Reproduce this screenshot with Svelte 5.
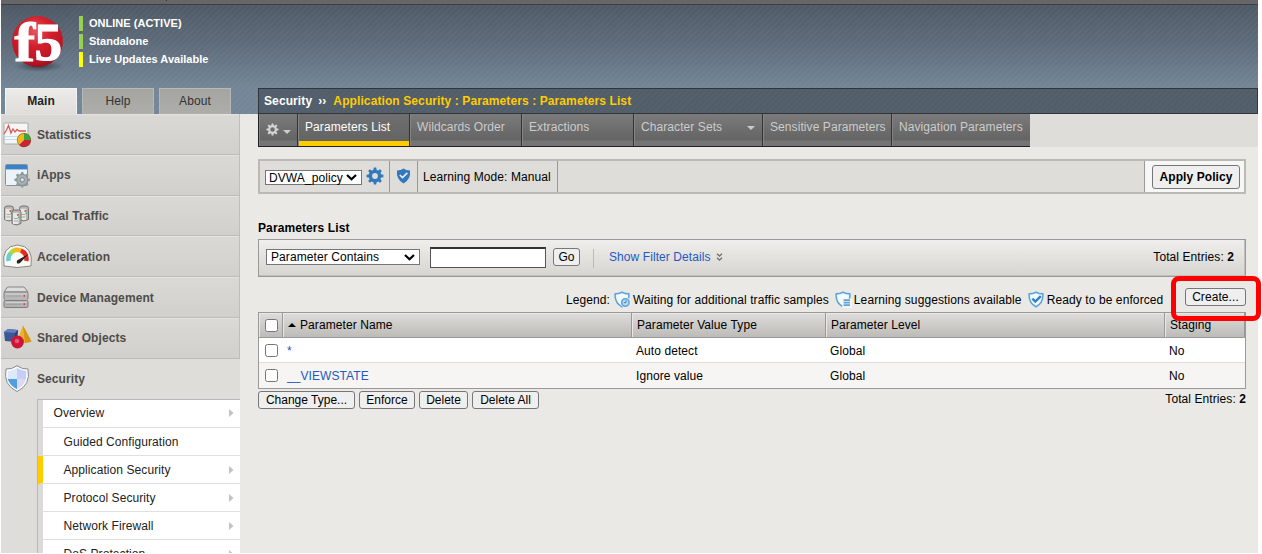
<script>
  const modules = [
    { name: 'Statistics', icon: 'stats' },
    { name: 'iApps', icon: 'iapps' },
    { name: 'Local Traffic', icon: 'traffic' },
    { name: 'Acceleration', icon: 'gauge' },
    { name: 'Device Management', icon: 'device' },
    { name: 'Shared Objects', icon: 'shapes' },
    { name: 'Security', icon: 'shield' }
  ];
  const submenu = [
    { name: 'Overview', top: true, arrow: true },
    { name: 'Guided Configuration' },
    { name: 'Application Security', arrow: true, active: true },
    { name: 'Protocol Security', arrow: true },
    { name: 'Network Firewall', arrow: true },
    { name: 'DoS Protection', arrow: true }
  ];
  const tabs = [
    { name: 'Parameters List', width: 112, active: true },
    { name: 'Wildcards Order', width: 112 },
    { name: 'Extractions', width: 112 },
    { name: 'Character Sets', width: 129, menu: true },
    { name: 'Sensitive Parameters', width: 129 },
    { name: 'Navigation Parameters', width: 138 }
  ];
  const rows = [
    { name: '*', type: 'Auto detect', level: 'Global', staging: 'No' },
    { name: '__VIEWSTATE', type: 'Ignore value', level: 'Global', staging: 'No' }
  ];
  const teeth = [0, 45, 90, 135, 180, 225, 270, 315];
</script>

{#snippet gear(size, color, hole)}
  <svg width={size} height={size} viewBox="0 0 18 18">
    {#each teeth as a}
      <path d="M7.2 4 L7.8 .6 H10.2 L10.8 4Z" fill={color} transform="rotate({a} 9 9)" />
    {/each}
    <circle cx="9" cy="9" r="4.6" fill="none" stroke={color} stroke-width={hole} />
  </svg>
{/snippet}

{#snippet chevron()}
  <svg width="11" height="7" viewBox="0 0 11 7"><path d="M1 1 L5.5 5.2 L10 1" fill="none" stroke="#000" stroke-width="2.2" /></svg>
{/snippet}

{#snippet legendShield(kind)}
  <svg class="lshield" width="17" height="17" viewBox="0 0 17 17">
    <path d="M1.2 2.9 Q5 2.8 8 1.2 Q11 2.8 14.8 2.9 Q15.6 11.8 8 15.8 Q.4 11.8 1.2 2.9Z" fill="#f4faff" stroke="#5da5da" stroke-width="1.6" />
    {#if kind === 'wait'}
      <circle cx="11.4" cy="11.3" r="5.2" fill="#f3f5f5" />
      <circle cx="11.4" cy="11.5" r="3.7" fill="#b9dbf3" stroke="#5da5da" stroke-width="1.6" />
      <path d="M12 9.2V11.7H9.8" fill="none" stroke="#3d86c0" />
    {:else if kind === 'learn'}
      <rect x="7.2" y="7.6" width="9.8" height="9.4" fill="#f3f5f5" />
      <path d="M8.6 9.2H15 M8.6 11.7H15 M8.6 14.2H15" stroke="#5da5da" stroke-width="1.8" />
    {:else}
      <path d="M4.4 7.6L7.3 10.6L12.8 5.1" fill="none" stroke="#2d82c8" stroke-width="2.4" />
    {/if}
  </svg>
{/snippet}

{#snippet moduleIcon(kind)}
  <svg width="30" height="30" viewBox="0 0 30 30">
    {#if kind === 'stats'}
      <rect x="2" y="3" width="24" height="21" rx="1" fill="#f5f6f6" stroke="#aaa" />
      <path d="M3 16.5H25M3 19.5H25" stroke="#c3dff1" />
      <path d="M2 14L4.5 10L6.5 5.5L9 13L11 9L13 12L15 9.5L17 11H24" fill="none" stroke="#d75a5b" stroke-width="1.3" />
      <path d="M22 20V13A7 7 0 0 0 17 25Z" fill="#f2b91c" />
      <path d="M22 20V13A7 7 0 0 1 29 20Z" fill="#3da638" />
      <path d="M22 20H29A7 7 0 0 1 17 25Z" fill="#ce2036" />
      <circle cx="22" cy="20" r="6.7" fill="none" stroke="#6e5c20" stroke-opacity=".5" />
    {:else if kind === 'iapps'}
      <rect x="3.5" y="4.5" width="22" height="21" rx="1" fill="#edf4f8" stroke="#8293a2" />
      <rect x="4" y="5" width="21" height="4" fill="#3c82c7" />
      <path d="M4 9.5H25" stroke="#9fc4e4" />
      {#each teeth as a}
        <path d="M18.4 15L19.1 12H21.3L22 15Z" fill="#929da0" transform="rotate({a} 20.2 19.8)" />
      {/each}
      <circle cx="20.2" cy="19.8" r="5.6" fill="#a6b0b1" stroke="#849094" />
      <circle cx="20.2" cy="19.8" r="2.2" fill="#d9dddd" stroke="#788588" />
    {:else if kind === 'traffic'}
      {#each [[2.5, 5], [17.5, 5], [10, 9]] as [x, y]}
        <path d="M{x} {y + 2.5}Q{x} {y} {x + 2.5} {y}H{x + 6.5}Q{x + 9} {y} {x + 9} {y + 2.5}V{y + 13.5}Q{x + 4} {y + 16.5} {x} {y + 13.5}Z" fill="#b5b5b3" stroke="#777" />
        <path d="M{x + 1} {y + 2.8}H{x + 6.5}V{y + 14}H{x + 1}Z" fill="#e6e6e4" />
        <path d="M{x + 2} {y + 8.5}H{x + 6}M{x + 2} {y + 11}H{x + 6}" stroke="#aaa" />
        <rect x={x + 5} y={y + 4} width="1.8" height="1.8" fill="#dd5050" /><rect x={x + 6} y={y + 6.5} width="1.5" height="1.5" fill="#47bd43" />
      {/each}
    {:else if kind === 'gauge'}
      <path d="M2 24Q-1 4 15.5 3Q32 4 29 24Q15 27 2 24Z" fill="#faf9f6" stroke="#858582" />
      <path d="M6.7 19A8.7 8.7 0 0 1 8.8 11" fill="none" stroke="#65cfd1" stroke-width="4.5" />
      <path d="M8.4 11.6A8.7 8.7 0 0 1 13.2 8" fill="none" stroke="#b4d63b" stroke-width="4.5" />
      <path d="M12.8 8A8.7 8.7 0 0 1 19.5 9" fill="none" stroke="#ffb41e" stroke-width="4.5" />
      <path d="M19 8.6A8.7 8.7 0 0 1 24.2 19" fill="none" stroke="#e62822" stroke-width="4.5" />
      <path d="M15 18.5L26.5 12L18 21Q14 23 15 18.5Z" fill="#222" />
    {:else if kind === 'device'}
      <path d="M5.5 4H22L26 9H2Z" fill="#ddd" stroke="#858585" />
      <rect x="2" y="9" width="24" height="7.5" rx="1.2" fill="#b7b7b7" stroke="#818181" />
      <path d="M3 16.5H25V18H3Z" fill="#ececec" />
      <rect x="2" y="17.5" width="24" height="7" rx="1.2" fill="#b2b2b2" stroke="#7d7d7d" />
      <path d="M3.5 11H25M3.5 19.3H25" stroke="#d8d8d8" />
      <path d="M4 13H19M4 21.4H19" stroke="#a0a0a0" /><path d="M21.5 12.8H23M21.5 21.2H23" stroke="#e43b42" stroke-width="1.7" />
    {:else if kind === 'shapes'}
      <path d="M2 9L6 6L16 7L14 19L3 18Z" fill="#3b5795" /><path d="M2 9L6 6L16 7L13 10Z" fill="#637fbd" /><path d="M13 10L16 7L15 20L12 20Z" fill="#294078" />
      <path d="M21 2.5L29.5 18.5Q23 21.5 15 18Z" fill="#edb22d" /><path d="M21 2.5L29.5 18.5L23 20Z" fill="#d69418" />
      <circle cx="15.5" cy="19" r="6.4" fill="#ce1539" /><circle cx="15" cy="18" r="2.3" fill="#ee7990" opacity=".7" />
    {:else}
      <path d="M4 5Q10 5.5 15 1.7Q20 5.5 26 5Q29 21 15 27.5Q1 21 4 5Z" fill="#fafbfc" stroke="#858b92" />
      <path d="M6 7Q11 7 15 4V15H5.7Z" fill="#dce9f9" /><path d="M15 4Q20 7 24.2 7L24 15H15Z" fill="#c8cdf7" />
      <path d="M5.7 15H15V25.2Q8 22 5.7 15Z" fill="#529dde" /><path d="M15 15H24Q22 22 15 25.2Z" fill="#dcd9f8" />
    {/if}
  </svg>
{/snippet}

<div class="page">
  <div class="topline"><i></i></div>
  <header>
    <div class="brand">
      <svg class="logo" width="56" height="58" viewBox="0 0 56 58">
        <defs>
          <radialGradient id="ball" cx=".45" cy=".3" r=".75"><stop offset="0" stop-color="#e8555e" /><stop offset=".4" stop-color="#d2202d" /><stop offset=".8" stop-color="#bd1424" /><stop offset="1" stop-color="#8c0e1a" /></radialGradient>
          <radialGradient id="shade"><stop offset="0" stop-color="#202832" stop-opacity=".75" /><stop offset="1" stop-color="#303a45" stop-opacity="0" /></radialGradient>
        </defs>
        <ellipse cx="28" cy="51" rx="25" ry="6" fill="url(#shade)" />
        <circle cx="26.5" cy="26.5" r="25.4" fill="url(#ball)" />
        <g stroke="#fff" stroke-width="1.2">
          <text transform="translate(3.5 45.5) scale(1.12 1)" class="f">f</text>
          <text transform="translate(23.5 45) scale(1.04 1)" class="five">5</text>
        </g>
      </svg>
      <div class="status">
        <span>ONLINE (ACTIVE)</span><span>Standalone</span><span class="warn">Live Updates Available</span>
      </div>
    </div>
    <nav class="maintabs"><b>Main</b><span>Help</span><span>About</span></nav>
    <div class="crumbs"><b>Security</b><b class="sep">››</b><b class="path">Application Security : Parameters : Parameters List</b></div>
  </header>

  <div class="body">
    <aside>
      {#each modules as m}
        <div class="module" class:open={m.icon === 'shield'}>{@render moduleIcon(m.icon)}<b>{m.name}</b></div>
      {/each}
      <div class="submenu">
        {#each submenu as s}
          <div class="sub" class:active={s.active} class:top={s.top}>
            <span>{s.name}</span>
            {#if s.arrow}<svg width="5" height="8" viewBox="0 0 5 8"><path d="M0 0L4.5 4L0 8Z" fill="#c2c2c2" /></svg>{/if}
          </div>
        {/each}
      </div>
    </aside>

    <main>
      <div class="tabbar">
        <div class="tabs">
          <div class="tab cog">{@render gear(13, '#d5d5d5', 2.8)}<i class="tri"></i></div>
          {#each tabs as t}
            <div class="tab" class:active={t.active} style="width:{t.width}px"><span>{t.name}</span>{#if t.menu}<i class="tri"></i>{/if}</div>
          {/each}
        </div>
      </div>

      <div class="toolbar">
        <div class="cell policy"><div class="select"><span>DVWA_policy</span>{@render chevron()}</div>{@render gear(18, '#3178bc', 3.4)}</div>
        <div class="cell badge">
          <svg width="15" height="16" viewBox="0 0 15 16"><path d="M1 2.5Q5 2.5 7.5 .6Q10 2.5 14 2.5Q15 11.5 7.5 15.5Q0 11.5 1 2.5Z" fill="#3178bc" /><path d="M3.8 7L6.5 9.6L11.3 4.9" fill="none" stroke="#e9edf1" stroke-width="1.6" /></svg>
        </div>
        <div class="cell mode">Learning Mode: Manual</div>
        <div class="apply"><button>Apply Policy</button></div>
      </div>

      <h1>Parameters List</h1>
      <div class="filter">
        <div class="select wide"><span>Parameter Contains</span>{@render chevron()}</div>
        <input type="text" aria-label="Filter value" />
        <button class="go">Go</button>
        <i class="divider"></i>
        <a href="#filter">Show Filter Details</a>
        <svg class="more" width="7" height="9" viewBox="0 0 7 9"><path d="M1 .8L3.5 3L6 .8M1 4.8L3.5 7L6 4.8" fill="none" stroke="#77746c" stroke-width="1.4" /></svg>
        <span class="total">Total Entries: <b>2</b></span>
      </div>

      <div class="legend">
        <span>Legend:</span>{@render legendShield('wait')}<span class="l1">Waiting for additional traffic samples</span>
        {@render legendShield('learn')}<span class="l2">Learning suggestions available</span>
        {@render legendShield('ready')}<span class="l3">Ready to be enforced</span>
        <div class="create"><button>Create...</button><i class="mark"></i></div>
      </div>

      <div class="table">
        <div class="tr th">
          <div class="ck"><input type="checkbox" aria-label="Select all" /></div>
          <div class="name"><i class="up"></i>Parameter Name</div><div>Parameter Value Type</div><div>Parameter Level</div><div>Staging</div>
        </div>
        {#each rows as r}
          <div class="tr">
            <div class="ck"><input type="checkbox" aria-label="Select row" /></div>
            <div><a href="#param">{r.name}</a></div><div>{r.type}</div><div>{r.level}</div><div>{r.staging}</div>
          </div>
        {/each}
      </div>

      <div class="actions">
        <button style="width:97px">Change Type...</button><button style="width:56px">Enforce</button><button style="width:49px">Delete</button><button style="width:67px">Delete All</button>
        <span class="total">Total Entries: <b>2</b></span>
      </div>
    </main>
  </div>
</div>

<style>
  :global(body) { background: #fff; overflow: hidden; }
  * { box-sizing: border-box; }
  .page { position: relative; margin-left: 1px; width: 1257px; height: 553px; background: #eae9e5; color: #000; font: 12px/16px "Liberation Sans", Arial, sans-serif; letter-spacing: .08px; white-space: nowrap; }
  i { display: block; }
  svg { display: block; flex: none; }
  a { color: #2359c4; text-decoration: none; }
  .topline { height: 5px; background: #666; border-bottom: 1px solid #3d3f42; }
  .topline i { width: 1px; height: 1px; margin-left: 165px; background: #333; }
  header { height: 109px; display: grid; grid-template-columns: 257px 1fr; grid-template-rows: 83px 26px; background: repeating-linear-gradient(135deg, rgba(255,255,255,.03) 0 1.41px, transparent 1.41px 4.243px), linear-gradient(#4f5a66, #5f6d7c 38%, #738596 75%, #748799); }
  .brand { grid-column: 1 / 3; display: flex; padding: 10px 0 0 10px; }
  .logo text { fill: #fff; font-family: "Liberation Serif", serif; font-weight: 700; letter-spacing: 0; }
  .logo { overflow: visible; }
  .f { font-size: 55px; }
  .five { font-size: 53px; }
  .status { margin: 1px 0 0 12px; color: #fff; font-weight: 700; font-size: 11px; line-height: 15px; letter-spacing: .02px; }
  .status span { display: block; height: 15px; margin-bottom: 3px; border-left: 4px solid #97d151; padding-left: 6px; }
  .status .warn { border-color: #ff0; }
  .maintabs { display: flex; gap: 5px; padding-left: 4px; }
  .maintabs > * { width: 72px; height: 26px; border: 1px solid #b7b7b3; border-bottom: 0; background: linear-gradient(#a4a5a1, #adada9); color: #333; text-align: center; line-height: 25px; }
  .maintabs b { background: linear-gradient(#ecebe8, #deddd9); border-color: #f4f4f2; color: #222; }
  .crumbs { border: 1px solid #333538; background: repeating-linear-gradient(135deg, rgba(85,90,88,.6) 0 1.41px, transparent 1.41px 4.243px), #52606f; color: #fff; display: flex; padding-left: 5px; line-height: 24px; letter-spacing: .1px; }
  .sep { margin: 0 7px 0 6px; }
  .path { color: #fc0; }
  .body { display: flex; height: 439px; }
  aside { width: 239px; flex: none; background: #deddd9; overflow: hidden; }
  .module { height: 40.8px; display: flex; align-items: center; gap: 4px; padding: 1px 0 0 2px; border-right: 1px solid #bebebb; border-bottom: 1px solid #bcbcb9; box-shadow: inset 0 1px #e4e3e0; background: linear-gradient(#dad9d5, #d1d0cc); color: #4d4c4a; }
  .module b { letter-spacing: .09px; }
  .module svg { position: relative; left: -1px; }
  .module:first-child { padding-top: 2px; }
  .module.open { height: 40.2px; background: #deddd9; border: 0; box-shadow: none; }
  .submenu { margin-left: 36px; width: 203px; border-left: 1px solid #b7b7b7; border-top: 1px solid #b7b7b7; }
  .sub { height: 28.1px; display: flex; align-items: center; justify-content: space-between; padding: 0 6px 0 20.5px; border-left: 5px solid #dadada; border-bottom: 1px solid #e0e0e0; background: #fff; color: #222; }
  .sub.top { padding: 0 6px 1px 10.5px; }
  .sub.active { border-left-color: #fc0; }
  main { width: 1018px; padding-left: 18px; }
  .tabbar { height: 33px; background: linear-gradient(90deg, #eae9e5 500px, #deddd9 500px); }
  .tabs { display: flex; height: 33px; width: 772px; border: 1px solid #222; border-top: 0; color: #ccc; }
  .tab { flex: none; display: flex; justify-content: space-between; height: 32px; padding: 5px 7px 0 6px; border-right: 1px solid #333; border-left: 1px solid #858585; background: linear-gradient(#7b7b7b, #646464 26px, #757575 27px, #747474); }
  .tab:last-child { border-right: 0; }
  .tab.active { color: #fff; background: linear-gradient(#6f6f6f, #646464 27px, #fc0 27px); }
  .tab .tri { margin-top: 7px; }
  .tab.cog { width: 39px; padding: 9px 6px 0; }
  .tri { width: 0; height: 0; border: 4px solid transparent; border-top: 4.5px solid #ccc; border-bottom: 0; }
  .toolbar { margin-top: 12px; width: 988px; height: 35px; display: flex; border: 2px solid #b9b9b6; background: #deddd9; }
  .cell { border-right: 1px solid #999; display: flex; align-items: center; }
  .policy { width: 130px; padding-left: 5px; gap: 4px; }
  .policy > svg, .badge svg { margin-bottom: 1px; }
  .badge { width: 28px; padding-left: 6px; }
  .mode { width: 140px; padding-left: 5px; }
  .select { width: 97px; height: 15px; border: 1px solid #767676; background: #fff; display: flex; align-items: center; justify-content: space-between; padding: 0 4px 0 3px; margin-top: 2px; }
  .apply { margin-left: auto; width: 100px; background: #f7f7f5; border-left: 1px solid #999; display: flex; align-items: center; padding-left: 7px; }
  button { height: 18px; padding: 0; border: 1px solid #777; border-radius: 3px; background: #efefef; color: #000; font: 12px/14px "Liberation Sans", Arial, sans-serif; letter-spacing: .08px; }
  .apply button { width: 88px; height: 24px; font-weight: 700; }
  h1 { margin: 26px 0 3px; font-size: 12px; line-height: 16px; letter-spacing: .1px; }
  .filter { width: 988px; height: 38px; display: flex; align-items: center; border: 1px solid #999; box-shadow: inset -1px -1px #c0c0bd; background: linear-gradient(#efeeec, #d6d5d0); padding: 0 11px 2px 7px; }
  .filter .wide { width: 154px; height: 16px; margin: 0; padding: 0 4px; }
  .filter input { width: 116px; height: 21px; margin: 0 7px 0 10px; border: 1px solid #555; border-top: 2px solid #333; background: #fff; padding: 0; }
  .go { width: 27px; }
  .divider { width: 1px; height: 19px; margin: 2px 15px 0 13px; background: #bbb; }
  .more { margin-left: 5px; }
  .total { margin-left: auto; }
  .legend { height: 35px; width: 988px; display: flex; align-items: flex-end; padding: 0 0 4px 308px; }
  .lshield { margin: 0 2px 0 4px; }
  .l1, .l2 { margin-right: 2px; }
  .l1, .l2, .l3 { letter-spacing: .1px; }
  .create { position: relative; margin: 0 0 2px auto; width: 61px; height: 18px; }
  .create button { width: 61px; display: block; }
  .mark { position: absolute; left: -14px; top: -12px; width: 90px; height: 45px; border: 5px solid #f00; border-radius: 8px; }
  .table { width: 988px; border: 1px solid #999; box-shadow: inset -1px -1px #c5c5c2; }
  .tr { display: grid; grid-template-columns: 24px 349px 194px 339px 80px; height: 25px; background: #fff; border-bottom: 1px solid #ddd; line-height: 26px; }
  .tr > div { padding-left: 5px; }
  .tr > div:not(.ck) { padding-left: 4px; }
  .tr:last-child { background: #f6f5f3; border-bottom: 0; height: 25px; }
  .th { background: linear-gradient(#deddd9, #bcbbb7); border-bottom: 1px solid #999; line-height: 24px; }
  .th > div { border-right: 1px solid #999; box-shadow: inset 1px 1px #e9e8e5; }
  .tr.th > div:not(.ck) { padding-left: 5px; }
  .th .name { display: flex; align-items: center; }
  .up { border: 4px solid transparent; border-top: 0; border-bottom: 4px solid #000; margin-right: 4px; }
  .ck { display: flex; align-items: center; }
  .ck input { appearance: none; width: 13px; height: 13px; margin: 0 0 0 1px; border: 1px solid #767676; border-radius: 2.5px; background: #fff; }
  .tr:not(.th) .ck input { margin-top: -1px; }
  .actions { width: 988px; display: flex; gap: 4px; padding-top: 2px; }
  .actions button { letter-spacing: 0; }
</style>
